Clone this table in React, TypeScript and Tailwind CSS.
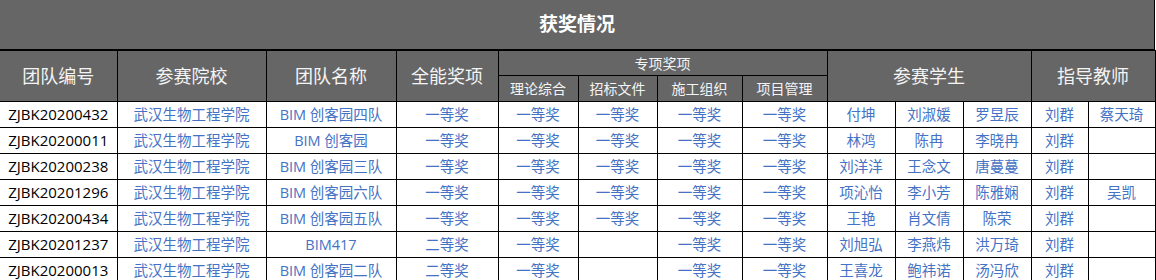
const cols = [117, 149, 130, 102, 80, 79, 85, 85, 68, 68, 68, 57, 67];

type Row = {
  id: string;
  school: string;
  team: string;
  overall: string;
  special: string[];
  students: string[];
  teachers: string[];
};

const school = '武汉生物工程学院';
const first = '一等奖';
const second = '二等奖';

const rows: Row[] = [
  { id: 'ZJBK20200432', school, team: 'BIM 创客园四队', overall: first, special: [first, first, first, first], students: ['付坤', '刘淑媛', '罗昱辰'], teachers: ['刘群', '蔡天琦'] },
  { id: 'ZJBK20200011', school, team: 'BIM 创客园', overall: first, special: [first, first, first, first], students: ['林鸿', '陈冉', '李晓冉'], teachers: ['刘群', ''] },
  { id: 'ZJBK20200238', school, team: 'BIM 创客园三队', overall: first, special: [first, first, first, first], students: ['刘洋洋', '王念文', '唐蔓蔓'], teachers: ['刘群', ''] },
  { id: 'ZJBK20201296', school, team: 'BIM 创客园六队', overall: first, special: [first, first, first, first], students: ['项沁怡', '李小芳', '陈雅娴'], teachers: ['刘群', '吴凯'] },
  { id: 'ZJBK20200434', school, team: 'BIM 创客园五队', overall: first, special: [first, first, first, first], students: ['王艳', '肖文倩', '陈荣'], teachers: ['刘群', ''] },
  { id: 'ZJBK20201237', school, team: 'BIM417', overall: second, special: [first, '', first, first], students: ['刘旭弘', '李燕炜', '洪万琦'], teachers: ['刘群', ''] },
  { id: 'ZJBK20200013', school, team: 'BIM 创客园二队', overall: second, special: [first, '', first, first], students: ['王喜龙', '鲍祎诺', '汤冯欣'], teachers: ['刘群', ''] },
];

const font = { fontFamily: '"Open Sans", "Noto Sans CJK SC", sans-serif' };

export default function App() {
  return (
    <div className="w-[1156px] h-[280px] overflow-hidden bg-white" style={font}>
      <div className="flex h-[50px] w-[1155px] items-center justify-center border-b border-r border-black bg-[#666666]">
        <span className="text-[19px] font-bold text-white">获奖情况</span>
      </div>
      <table className="table-fixed border-collapse w-[1155px]">
        <colgroup>
          {cols.map((w, i) => (
            <col key={i} style={{ width: w }} />
          ))}
        </colgroup>
        <thead>
          <tr className="h-[25px]">
            <HeadCell rowSpan={2} first>团队编号</HeadCell>
            <HeadCell rowSpan={2}>参赛院校</HeadCell>
            <HeadCell rowSpan={2}>团队名称</HeadCell>
            <HeadCell rowSpan={2}>全能奖项</HeadCell>
            <th colSpan={4} className="border border-black bg-[#666666] p-0 text-[14px] font-normal text-[#f4f4f4]">
              专项奖项
            </th>
            <HeadCell rowSpan={2} colSpan={3}>参赛学生</HeadCell>
            <HeadCell rowSpan={2} colSpan={2}>指导教师</HeadCell>
          </tr>
          <tr className="h-[26px]">
            {['理论综合', '招标文件', '施工组织', '项目管理'].map((t) => (
              <th key={t} className="border border-black bg-[#666666] p-0 text-[14px] font-normal text-[#f4f4f4]">
                {t}
              </th>
            ))}
          </tr>
        </thead>
        <tbody>
          {rows.map((r) => (
            <tr key={r.id} className="h-[26px]">
              <td className="border border-l-0 border-black p-0 text-center text-[15px] text-black">{r.id}</td>
              <Cell>{r.school}</Cell>
              <Cell>{r.team}</Cell>
              <Cell>{r.overall}</Cell>
              {r.special.map((s, i) => (
                <Cell key={i}>{s}</Cell>
              ))}
              {r.students.map((s, i) => (
                <Cell key={i}>{s}</Cell>
              ))}
              {r.teachers.map((s, i) => (
                <Cell key={i}>{s}</Cell>
              ))}
            </tr>
          ))}
        </tbody>
      </table>
    </div>
  );
}

function HeadCell({
  children,
  rowSpan,
  colSpan,
  first,
}: {
  children: React.ReactNode;
  rowSpan?: number;
  colSpan?: number;
  first?: boolean;
}) {
  return (
    <th
      rowSpan={rowSpan}
      colSpan={colSpan}
      className={`border border-black bg-[#666666] p-0 text-[18px] font-normal text-[#f4f4f4] ${first ? 'border-l-0' : ''}`}
    >
      {children}
    </th>
  );
}

function Cell({ children }: { children: React.ReactNode }) {
  return (
    <td className="border border-black p-0 text-center text-[14.5px] whitespace-nowrap text-[#4472c4]">{children}</td>
  );
}
